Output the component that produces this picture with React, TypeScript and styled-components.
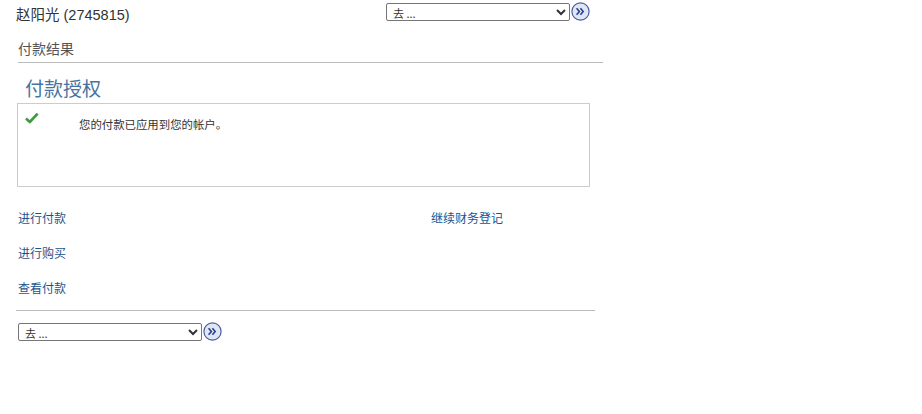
import React from "react";
import styled, { createGlobalStyle } from "styled-components";

const Global = createGlobalStyle`
  html, body { margin: 0; padding: 0; background: #fff; }
  body { font-family: "Liberation Sans", "Noto Sans CJK SC", sans-serif; color: #333; }
`;

const Page = styled.div`
  width: 610px;
  padding: 0;
`;

const Header = styled.div`
  display: flex;
  align-items: flex-start;
  justify-content: space-between;
  width: 574px;
  margin-left: 16px;
  height: 28px;
`;

const UserName = styled.div`
  font-size: 14.5px;
  line-height: 16px;
  padding-top: 7px;
  color: #333;
`;

const GoGroup = styled.div<{ $top: number }>`
  display: flex;
  align-items: center;
  gap: 1px;
  padding-top: ${(p) => p.$top}px;
`;

const GoSelect = styled.select`
  width: 184px;
  height: 18px;
  font-family: "Noto Sans CJK SC", sans-serif;
  font-size: 11px;
  color: #333;
  border: 1px solid #767676;
  border-radius: 2px;
  padding: 0 2px;
  background: #fff;
  box-sizing: border-box;
`;

const GoButton = styled.button`
  width: 19px;
  height: 19px;
  padding: 0;
  border: none;
  background: transparent;
  display: flex;
  align-items: center;
  justify-content: center;
  cursor: pointer;
`;

const SectionTitle = styled.div`
  margin: 10px 0 0 18px;
  width: 585px;
  font-family: "Noto Sans CJK SC", sans-serif;
  font-size: 14px;
  line-height: 20px;
  color: #555;
  padding-bottom: 4px;
  border-bottom: 1px solid #bbb;
  box-sizing: border-box;
`;

const Heading = styled.h2`
  margin: 12px 0 0 25px;
  font-family: "Noto Sans CJK SC", sans-serif;
  font-weight: normal;
  font-size: 19px;
  line-height: 26px;
  color: #4872a0;
`;

const MessageBox = styled.div`
  margin: 2px 0 0 17px;
  width: 573px;
  height: 84px;
  box-sizing: border-box;
  border: 1px solid #ccc;
  display: flex;
  align-items: flex-start;
  padding: 6px 0 0 7px;
`;

const CheckIcon = styled.span`
  width: 14px;
  height: 12px;
  display: block;
`;

const MessageText = styled.div`
  margin-left: 40px;
  margin-top: 6px;
  font-family: "Noto Sans CJK SC", sans-serif;
  font-size: 11.4px;
  line-height: 16px;
  color: #333;
`;

const Links = styled.div`
  display: grid;
  grid-template-columns: 413px auto;
  row-gap: 18px;
  margin: 22px 0 0 18px;
`;

const NavLink = styled.a`
  font-family: "Noto Sans CJK SC", sans-serif;
  font-size: 12px;
  line-height: 17px;
  color: #1a5590;
  text-decoration: none;
`;

const Divider = styled.div`
  margin: 14px 0 0 16px;
  width: 579px;
  border-top: 1px solid #bbb;
`;

const BottomGo = styled.div`
  margin: 11px 0 0 18px;
`;

const GoIcon = () => (
  <svg width="19" height="19" viewBox="0 0 19 19">
    <circle cx="9.5" cy="9.5" r="8.6" fill="#dfe7f7" stroke="#4d5b9a" strokeWidth="1.2" />
    <path d="M5.6 6.2 L8.4 9.5 L5.6 12.8" fill="none" stroke="#2c3f8c" strokeWidth="1.6" />
    <path d="M9.4 6.2 L12.2 9.5 L9.4 12.8" fill="none" stroke="#2c3f8c" strokeWidth="1.6" />
  </svg>
);

const Go: React.FC<{ top?: number }> = ({ top = 0 }) => (
  <GoGroup $top={top}>
    <GoSelect defaultValue="">
      <option value="">去 ...</option>
    </GoSelect>
    <GoButton aria-label="go">
      <GoIcon />
    </GoButton>
  </GoGroup>
);

export default function App() {
  return (
    <Page>
      <Global />
      <Header>
        <UserName>赵阳光 (2745815)</UserName>
        <Go top={2} />
      </Header>
      <SectionTitle>付款结果</SectionTitle>
      <Heading>付款授权</Heading>
      <MessageBox>
        <CheckIcon>
          <svg width="14" height="12" viewBox="0 0 14 12">
            <path d="M1 6.5 L4.8 10 L12.6 1.6" fill="none" stroke="#3d9a3d" strokeWidth="2.6" strokeLinejoin="round" />
          </svg>
        </CheckIcon>
        <MessageText>您的付款已应用到您的帐户。</MessageText>
      </MessageBox>
      <Links>
        <NavLink href="#">进行付款</NavLink>
        <NavLink href="#">继续财务登记</NavLink>
        <NavLink href="#">进行购买</NavLink>
        <span />
        <NavLink href="#">查看付款</NavLink>
        <span />
      </Links>
      <Divider />
      <BottomGo>
        <Go />
      </BottomGo>
    </Page>
  );
}
